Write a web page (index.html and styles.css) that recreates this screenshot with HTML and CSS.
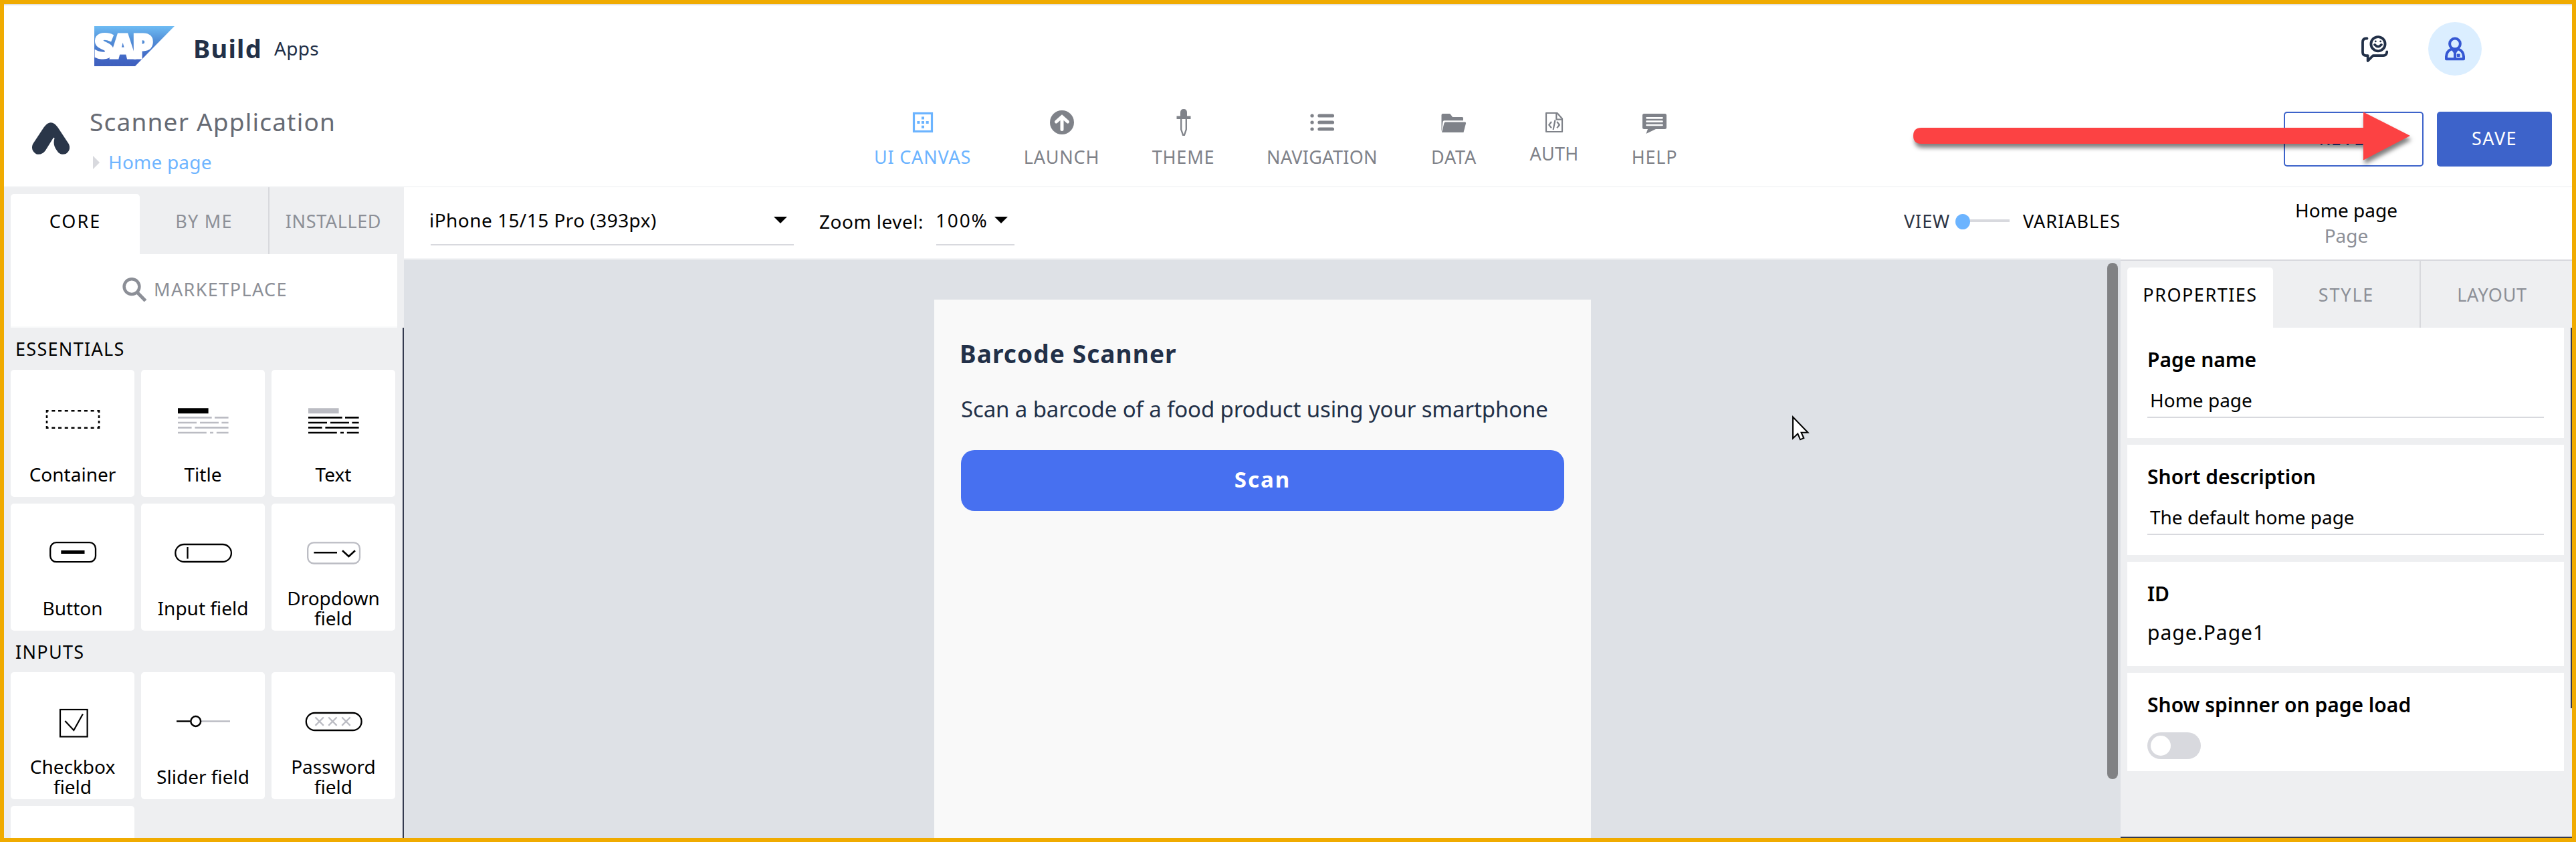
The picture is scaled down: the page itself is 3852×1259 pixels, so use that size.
FILE: index.html
```
<!DOCTYPE html>
<html lang="en">
<head>
<meta charset="utf-8">
<title>Scanner Application</title>
<link rel="stylesheet" href="styles.css">
</head>
<body>
<div class="frame">
  <header class="brand-bar">
    <svg class="sap-logo" viewBox="0 0 120 60">
      <defs><linearGradient id="sap" x1="0" y1="0" x2="0" y2="1"><stop offset="0" stop-color="#6fbcf4"/><stop offset=".35" stop-color="#5390d8"/><stop offset=".8" stop-color="#4166c4"/><stop offset="1" stop-color="#3f5fbd"/></linearGradient></defs>
      <polygon points="0,0 120,0 61,60 0,60" fill="url(#sap)"/>
      <text x="0" y="48" class="sap-word" textLength="88" lengthAdjust="spacing">SAP</text>
    </svg>
    <span class="product">Build</span>
    <span class="edition">Apps</span>
    <svg class="feedback" viewBox="0 0 40 40" fill="none" stroke="#223048" stroke-width="3.800" stroke-linecap="round" stroke-linejoin="round">
      <path d="M8.500 4.500H7Q2 4.500 2 10V25Q2 30 7 30.200H9.700V38L17.500 30.200H33Q38 30 38.200 24.500"/>
      <circle cx="25" cy="12.700" r="10.600"/>
      <path d="M20 13.800Q25 19.500 30 13.800" stroke-width="3.600"/>
      <circle cx="21.300" cy="8.900" r="1.400" fill="#223048" stroke="none"/><circle cx="28.700" cy="8.900" r="1.400" fill="#223048" stroke="none"/>
    </svg>
    <svg class="avatar" viewBox="0 0 80 80">
      <circle cx="40" cy="40" r="40" fill="#dbeeff"/>
      <g fill="none" stroke="#3658d3" stroke-width="4" stroke-linejoin="round">
        <circle cx="40" cy="32.500" r="7.900"/>
        <path d="M27 55.300V51.500Q27.500 43.500 34.500 40.500H45.500Q52.500 43.500 53 51.500V55.300Z"/>
        <path d="M40 44V55"/>
      </g>
      <path d="M33 39H47L40 49Z" fill="#3658d3"/><rect x="42.700" y="47.500" width="5" height="4.500" rx="1" fill="#3658d3"/>
    </svg>
  </header>

  <div class="app-bar">
    <svg class="app-mark" viewBox="0 0 56 48"><path fill="#2a3649" d="M1 32.500L17.500 7.500Q28-7 38.500 7.500L55 32.500Q58.500 42 50.500 47Q41.500 50 37 42Q30.500 33.500 33.500 24Q33 21.500 31.200 24L20 42Q14.500 49.500 6 47.300Q-2.500 42 1 32.500Z"/></svg>
    <div class="app-title">
      <div class="app-name">Scanner Application</div>
      <div class="crumb"><i class="crumb-arrow"></i><span>Home page</span></div>
    </div>
    <nav class="main-nav">
      <a class="nav-item ui active"><svg viewBox="0 0 40 40"><rect x="6.500" y="6.500" width="27" height="27" fill="none" stroke="currentColor" stroke-width="3.200"/><path fill="currentColor" d="M18 11.500h4v4h-4zM18 18h4v4h-4zM18 24.700h4v4h-4zM11.400 18h4v4h-4zM24.700 18h4v4h-4z"/></svg><span>UI CANVAS</span></a>
      <a class="nav-item launch"><svg viewBox="0 0 40 40"><circle cx="20" cy="20" r="18" fill="currentColor"/><path d="M20 30.500V13M11.500 19L20 11.500L28.500 19" fill="none" stroke="#fff" stroke-width="5" stroke-linecap="round"/></svg><span>LAUNCH</span></a>
      <a class="nav-item theme"><svg viewBox="0 0 40 40"><path fill="currentColor" d="M15 10.500V5.500Q15 0 20 0T25 5.500V10.500H30.500V15H9.500V10.500Z"/><path d="M16.200 15V30.500L19 38.800H21L23.800 30.500V15" fill="none" stroke="currentColor" stroke-width="2.300"/></svg><span>THEME</span></a>
      <a class="nav-item navigation"><svg viewBox="0 0 40 40" stroke="currentColor" stroke-width="5.200" stroke-linecap="round"><path d="M5 10h.1M5 20h.1M5 30h.1M16 10H35.500M16 20H35.500M16 30H35.500"/></svg><span>NAVIGATION</span></a>
      <a class="nav-item data"><svg viewBox="0 0 40 40" fill="currentColor"><path d="M1.500 34V9Q1.500 7 3.500 7H13.500Q14.500 7 15.500 8.500L18 12H32.500Q34 12 34 13.500V17.300H5.500Q4 17.300 3.600 19Z"/><path d="M2 35L5.500 21Q6 19.500 7.500 19.500H36.500Q38.500 19.500 38 21.500L34.500 35Z"/></svg><span>DATA</span></a>
      <a class="nav-item auth"><svg viewBox="0 0 40 40" fill="none" stroke="currentColor" stroke-width="2.200" stroke-linejoin="round"><path d="M8 6H24.500L32 14.500V34H8Z"/><path d="M23.300 6V15.600H32"/><path d="M16 19L12.300 23.700L16 28.400M24.200 19L27.900 23.700L24.200 28.400M21.500 16.500L18.600 31"/></svg><span>AUTH</span></a>
      <a class="nav-item help"><svg viewBox="0 0 40 40"><path fill="currentColor" d="M4.500 7H35.500Q38 7 38 9.500V27.500Q38 30 35.500 30H22L7.500 37L10 30H4.500Q2 30 2 27.500V9.500Q2 7 4.500 7Z"/><path d="M8.500 13.300H31.500M8.500 18.700H31.500M8.500 24H31.500" stroke="#fff" stroke-width="2.700" stroke-linecap="round"/></svg><span>HELP</span></a>
    </nav>
    <div class="actions">
      <button class="btn revert">REVERT</button>
      <button class="btn save">SAVE</button>
    </div>
  </div>

  <main class="main">
    <aside class="library">
      <div class="tabs">
        <div class="tab on core">CORE</div>
        <div class="tab by-me">BY ME</div>
        <div class="tab installed">INSTALLED</div>
      </div>
      <div class="market">
        <svg viewBox="0 0 36 36" fill="none" stroke="#8c8f97"><circle cx="14" cy="13.600" r="11.400" stroke-width="4.500"/><path d="M23 23L34.500 34.800" stroke-width="5"/></svg>
        <span>MARKETPLACE</span>
      </div>
      <div class="library-scroll">
        <h3 class="group essentials">ESSENTIALS</h3>
        <div class="cards">
          <div class="card"><svg viewBox="0 0 185 126" fill="none" stroke="#000" stroke-width="2.600"><path d="M53 61.300H133M53 86.700H133" stroke-dasharray="5 4.720" stroke-dashoffset="1.400"/><path d="M54 60V88M132 60V88" stroke-dasharray="4 4" stroke-dashoffset="0"/></svg><span>Container</span></div>
          <div class="card"><svg class="text-lines title-lines" viewBox="0 0 185 126"><path class="head" d="M55 57.300H100.600V65.300H55Z"/><path class="body" d="M55 71.300H105.700M110 71.300H130.600M55 79H83M88 79H116M120.400 79H130.600M55 86.300H75.600M80.400 86.300H130.600M55 94H97.800M103 94H108M112.800 94H130.600"/></svg><span>Title</span></div>
          <div class="card"><svg class="text-lines body-lines" viewBox="0 0 185 126"><path class="head" d="M55 57.300H100.600V65.300H55Z"/><path class="body" d="M55 71.300H105.700M110 71.300H130.600M55 79H83M88 79H116M120.400 79H130.600M55 86.300H75.600M80.400 86.300H130.600M55 94H97.800M103 94H108M112.800 94H130.600"/></svg><span>Text</span></div>
          <div class="card"><svg viewBox="0 0 185 126" fill="none" stroke="#000" stroke-width="2.300"><rect x="59.200" y="58.200" width="67.800" height="29" rx="9"/><path d="M75.300 72.500H110.500" stroke-width="4.800"/></svg><span>Button</span></div>
          <div class="card"><svg viewBox="0 0 185 126" fill="none" stroke="#000" stroke-width="2.300"><rect x="51.300" y="61" width="83.600" height="26" rx="13"/><path d="M69.500 65V82.500"/></svg><span>Input field</span></div>
          <div class="card"><svg viewBox="0 0 185 126" fill="none" stroke="#000" stroke-width="2.600"><rect x="54.200" y="58.300" width="77.800" height="31.200" rx="9" stroke="#bbbcc3" stroke-width="2.300"/><path d="M63.400 73.300H98M106 70.200L115.500 79L125 70.200"/></svg><span>Dropdown field</span></div>
        </div>
        <h3 class="group inputs">INPUTS</h3>
        <div class="cards">
          <div class="card"><svg viewBox="0 0 185 126" fill="none" stroke="#000" stroke-width="2.200"><rect x="74" y="56" width="40.600" height="40.500"/><path d="M81.300 73L94.300 87L107.800 62.700"/></svg><span>Checkbox field</span></div>
          <div class="card"><svg viewBox="0 0 185 126" fill="none" stroke="#000" stroke-width="2.500"><path d="M53 73.500H73.500"/><path d="M89 73.500H133" stroke="#bbbcc3"/><circle cx="81.700" cy="73.500" r="7.400"/></svg><span>Slider field</span></div>
          <div class="card"><svg viewBox="0 0 185 126" fill="none" stroke="#000" stroke-width="2.300"><rect x="51.800" y="61" width="82.800" height="26" rx="13"/><path d="M65.500 67.500l12.400 12.400m0-12.400l-12.400 12.400M85.200 67.500l12.400 12.400m0-12.400l-12.400 12.400M105.300 67.500l12.400 12.400m0-12.400l-12.400 12.400" stroke="#bbbcc3"/></svg><span>Password field</span></div>
          <div class="card"></div>
        </div>
      </div>
    </aside>

    <section class="workspace">
      <div class="toolbar">
        <div class="select device"><span>iPhone 15/15 Pro (393px)</span><i class="caret"></i></div>
        <div class="zoom-label">Zoom level:</div>
        <div class="select zoom"><span>100%</span><i class="caret"></i></div>
        <div class="mode">
          <span class="view">VIEW</span><i class="dot"></i><i class="track"></i><span class="variables">VARIABLES</span>
        </div>
      </div>
      <div class="canvas">
        <div class="phone">
          <h1>Barcode Scanner</h1>
          <p>Scan a barcode of a food product using your smartphone</p>
          <button class="scan">Scan</button>
        </div>
        <i class="scrollbar"></i>
      </div>
    </section>

    <aside class="inspector">
      <div class="selection"><div class="sel-name">Home page</div><div class="sel-type">Page</div></div>
      <div class="tabs">
        <div class="tab on properties">PROPERTIES</div>
        <div class="tab style">STYLE</div>
        <div class="tab layout">LAYOUT</div>
      </div>
      <div class="props">
        <div class="prop-list">
          <div class="prop tall"><label>Page name</label><div class="field">Home page</div></div>
          <div class="prop tall"><label>Short description</label><div class="field">The default home page</div></div>
          <div class="prop id"><label>ID</label><div class="value">page.Page1</div></div>
          <div class="prop spinner"><label>Show spinner on page load</label><div class="toggle"><i></i></div></div>
        </div>
        <i class="props-scroll"></i>
      </div>
    </aside>
  </main>

  <svg class="cursor" viewBox="0 0 30 40"><path d="M2 4.500V36.500L9.300 29.500L13 38.300L18.300 36L14.500 27.700H24.500Z" fill="#fff" stroke="#000" stroke-width="2"/></svg>
  <svg class="callout" viewBox="0 0 770 105"><path fill="#fc4243" d="M23 36H684V12.500L754 48L684 84.500V60H23Q11 60 11 48T23 36Z"/></svg>
</div>
</body>
</html>
```
FILE: styles.css
```
* { box-sizing: border-box; margin: 0; padding: 0; }
body { background: #fff; font-family: "Noto Sans", "Open Sans", sans-serif; font-size: 28px; color: #000; }
svg { display: block; flex: none; }
i { display: block; flex: none; }
button { font: inherit; }

.frame { position: relative; width: 3852px; height: 1259px; border: 6px solid #f0ab00; overflow: hidden; background: #fff; display: flex; flex-direction: column; }

.brand-bar { flex: none; height: 124px; border-top: 2px solid #e2e2e2; padding: 25px 135px 0; display: flex; align-items: flex-start; }
.sap-logo { width: 120px; height: 60px; margin-top: 6px; overflow: visible; }
.sap-word { font: 800 50px "Open Sans", "Noto Sans", sans-serif; fill: #fff; stroke: #fff; stroke-width: 3px; }
.product { width: 121px; margin: 9px 0 0 28px; font-size: 38px; font-weight: 700; line-height: 60px; letter-spacing: 1.250px; color: #223048; }
.edition { margin-top: 9px; line-height: 60px; letter-spacing: .3px; color: #223048; }
.feedback { width: 40px; height: 40px; margin: 20px 60px 0 auto; }
.avatar { width: 80px; height: 80px; }

.app-bar { flex: none; height: 150px; border-bottom: 2px solid #f6f7f8; display: flex; align-items: flex-start; padding: 27px 30px 0 42px; }
.app-mark { width: 56px; height: 48px; margin: 26px 30px 0 0; }
.app-title { width: 1173px; }
.app-name { font-size: 37px; line-height: 50px; letter-spacing: 1.200px; color: #666a73; }
.crumb { display: flex; align-items: center; margin-top: 15px; line-height: 40px; color: #6fb5ff; }
.crumb-arrow { margin: 2px 13px 0 5px; border-left: 10px solid #d8d9de; border-top: 10px solid transparent; border-bottom: 10px solid transparent; }
.crumb span { letter-spacing: .2px; }
.main-nav { display: flex; gap: 79px; margin-top: 6px; }
.nav-item { display: flex; flex-direction: column; align-items: center; color: #7f8289; font-size: 27px; line-height: 32px; letter-spacing: .8px; white-space: nowrap; }
.nav-item svg { width: 40px; height: 40px; margin-bottom: 16px; }
.nav-item.active { color: #6cb4ff; }
.ui { width: 145px; } .launch { width: 113px; } .theme { width: 93px; } .navigation { width: 164px; } .data, .help { width: 72px; } .auth { width: 70px; }
.nav-item.navigation, .nav-item.auth { letter-spacing: .3px; }
.nav-item.auth svg { margin-bottom: 11px; }
.actions { display: flex; gap: 20px; margin: 10px 0 0 auto; }
.btn { height: 82px; border: 2px solid #3d63ca; border-radius: 5px; font-size: 27px; padding-bottom: 3px; letter-spacing: 1.500px; }
.revert { width: 209px; background: #fff; color: #2b479e; }
.save { width: 172px; background: #3d63ca; color: #fff; }

.main { flex: 1; min-height: 0; display: flex; }
.tabs { flex: none; height: 100px; display: flex; padding-left: 10px; font-size: 27px; color: #8c8f97; }
.tab { display: flex; align-items: center; justify-content: center; }
.tab.on { margin-top: 10px; padding-bottom: 10px; background: #fff; color: #000; border-radius: 5px 5px 0 0; }

.library { flex: none; width: 598px; background: #eeeff1; display: flex; flex-direction: column; }
.core { width: 193px; letter-spacing: 2px; }
.by-me { width: 194px; border-right: 2px solid #d8d9dd; letter-spacing: 1.200px; }
.installed { width: 191px; letter-spacing: .6px; }
.market { flex: none; height: 110px; margin: 0 10px; padding: 0 0 3px 167px; background: #fff; border-bottom: 2px solid #f9fafb; display: flex; align-items: center; gap: 11px; font-size: 27px; letter-spacing: 1.400px; color: #8c8f97; }
.market svg { width: 36px; height: 36px; }
.library-scroll { flex: 1; min-height: 0; overflow: hidden; border-right: 2px solid #343a4e; }
.group { height: 63px; padding: 1px 0 0 17px; line-height: 62px; font-size: 27px; font-weight: 400; letter-spacing: 1.300px; }
.group.inputs { height: 62px; }
.cards { display: grid; grid-template-columns: repeat(3, 185px); grid-auto-rows: 190px; gap: 10px; padding-left: 10px; }
.card { background: #fff; border-radius: 5px; line-height: 30px; text-align: center; }
.card svg { width: 185px; height: 126px; }
.card span { height: 60px; padding: 0 20px; display: flex; align-items: center; justify-content: center; }
.text-lines .body { stroke-width: 2.700px; }
.title-lines .head { fill: #000; } .title-lines .body { stroke: #bbbcc3; }
.body-lines .head { fill: #bbbcc3; } .body-lines .body { stroke: #000; }

.workspace { flex: 1; display: flex; flex-direction: column; }
.toolbar { flex: none; height: 108px; border-bottom: 2px solid #f4f5f7; display: flex; align-items: flex-start; padding: 18px 1px 0 40px; white-space: nowrap; }
.select { display: flex; align-items: center; justify-content: space-between; height: 69px; padding: 0 10px 5px 0; border-bottom: 2px solid #d8d9de; line-height: 62px; }
.caret { border-top: 10px solid #000; border-left: 10px solid transparent; border-right: 10px solid transparent; }
.device { width: 543px; } .device span { margin-left: -2px; letter-spacing: .450px; }
.zoom-label { width: 175px; margin: 2px 0 0 38px; line-height: 62px; letter-spacing: .5px; }
.zoom { width: 117px; } .zoom span { margin-left: -1px; letter-spacing: 1.800px; }
.mode { display: flex; align-items: center; height: 64px; margin-left: auto; font-size: 27px; }
.view { width: 77px; letter-spacing: .9px; color: #2c3444; }
.dot { width: 22px; height: 23px; margin-top: 3px; border-radius: 50%; background: #6cb4ff; }
.track { width: 59px; height: 4px; background: #d8d9de; }
.variables { width: 145px; margin-left: 20px; letter-spacing: 1px; }
.canvas { flex: 1; min-height: 0; background: #dee1e6; display: flex; align-items: flex-start; }
.phone { width: 982px; height: 805px; margin: 60px 0 0 793px; padding: 51px 40px 0; background: #f9f9f9; color: #223048; }
.phone h1 { margin-left: -2px; font-size: 37px; line-height: 60px; letter-spacing: 1.100px; }
.phone p { margin-top: 30px; font-size: 33px; line-height: 46px; letter-spacing: -.130px; white-space: nowrap; }
.scan { display: block; width: 902px; height: 91px; margin-top: 38px; padding-bottom: 4px; border: 0; border-radius: 20px; background: #4770f0; color: #fff; font-size: 33px; font-weight: 700; letter-spacing: 2px; }
.scrollbar { width: 16px; height: 772px; margin: 5px 4px 0 auto; border-radius: 8px; background: #808184; }

.inspector { flex: none; width: 675px; background: #eeeff1; border-bottom: 2px solid #343a4e; display: flex; flex-direction: column; }
.selection { flex: none; height: 110px; padding-top: 16px; background: #fff; border-bottom: 2px solid #d8d9de; line-height: 36px; text-align: center; }
.sel-type { margin-top: 2px; color: #8c8f97; }
.properties { width: 218px; letter-spacing: 1.500px; }
.style { width: 221px; border-right: 2px solid #d8d9dd; letter-spacing: 1.800px; }
.layout { width: 213px; letter-spacing: .7px; }
.props { flex: 1; display: flex; padding-left: 10px; align-items: flex-start; }
.prop-list { width: 653px; display: flex; flex-direction: column; gap: 10px; }
.prop { padding: 28px 30px 0; background: #fff; }
.prop.tall { height: 165px; } .prop.id { height: 156px; } .prop.spinner { height: 147px; }
.prop label { display: block; font-size: 30px; font-weight: 600; line-height: 40px; }
.field { height: 47px; margin-top: 20px; padding-left: 4px; line-height: 40px; border-bottom: 2px solid #d8d9de; }
.value { margin-top: 18px; font-size: 30px; line-height: 40px; letter-spacing: 1px; }
.toggle { width: 80px; height: 40px; margin-top: 21px; padding: 5px; border-radius: 20px; background: #d8d9de; }
.toggle i { width: 30px; height: 30px; border-radius: 50%; background: #fff; }
.props-scroll { width: 2px; height: 569px; margin-left: 10px; background: #343a4e; }

/* pointer and call-out arrow drawn over the page */
.cursor { position: absolute; left: 2673px; top: 613px; width: 30px; height: 40px; }
.callout { position: absolute; left: 2844px; top: 149px; width: 770px; height: 105px; filter: drop-shadow(2px 6px 3px rgba(0, 0, 0, .5)); }
```
